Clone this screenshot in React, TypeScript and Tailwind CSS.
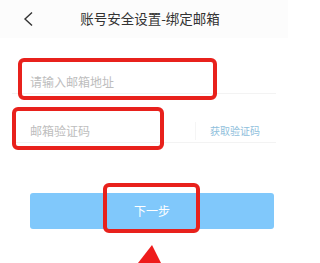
export default function App() {
  return (
    <div
      className="relative w-[288px] h-[263px] overflow-hidden bg-white"
      style={{ fontFamily: '"Noto Sans CJK SC", "Noto Sans", sans-serif' }}
    >
      {/* header */}
      <div className="relative flex h-[38px] items-center justify-center bg-[#fcfcfc]">
        <svg
          className="absolute left-[22px] top-[11px]"
          width="14"
          height="16"
          viewBox="0 0 14 16"
          fill="none"
        >
          <polyline points="10,1.5 3,8 10,14.5" stroke="#333" strokeWidth="1.4" />
        </svg>
        <span className="ml-[12px] text-[13.5px] text-[#333] leading-none">账号安全设置-绑定邮箱</span>
      </div>

      {/* form */}
      <div className="flex flex-col pl-[12px] pr-[12px]">
        <div className="mt-[28px] flex h-[28px] items-center border-b border-[#f3f3f3] pl-[18px] pt-[4px]">
          <span className="text-[12px] text-[#bdbdbd]">请输入邮箱地址</span>
        </div>
        <div className="mt-[21px] flex h-[28px] items-center border-b border-[#f3f3f3] pl-[18px] pt-[4px]">
          <span className="flex-1 text-[12px] text-[#bdbdbd]">邮箱验证码</span>
          <div className="h-[18px] w-px bg-[#f5f5f5]" />
          <span className="ml-[14px] mr-[16px] text-[10px] text-[#8fc0dc]">获取验证码</span>
        </div>
      </div>

      <div className="mt-[50px] ml-[30px] flex h-[36px] w-[244px] items-center justify-center rounded-[3px] bg-[#80c8fb]">
        <span className="text-[12px] text-white">下一步</span>
      </div>

      {/* annotation overlays */}
      <div className="absolute left-[18px] top-[58px] h-[42px] w-[199px] rounded-[6px] border-[4px] border-[#e8211c]" />
      <div className="absolute left-[12px] top-[107px] h-[43px] w-[152px] rounded-[6px] border-[4px] border-[#e8211c]" />
      <div className="absolute left-[103px] top-[183px] h-[50px] w-[97px] rounded-[6px] border-[4px] border-[#e8211c]" />
      <svg className="absolute left-[130px] top-[240px]" width="44" height="23" viewBox="0 0 44 23">
        <path d="M22 5 L31 23 L8 23 Z" fill="#ee1c1c" />
      </svg>
    </div>
  )
}
